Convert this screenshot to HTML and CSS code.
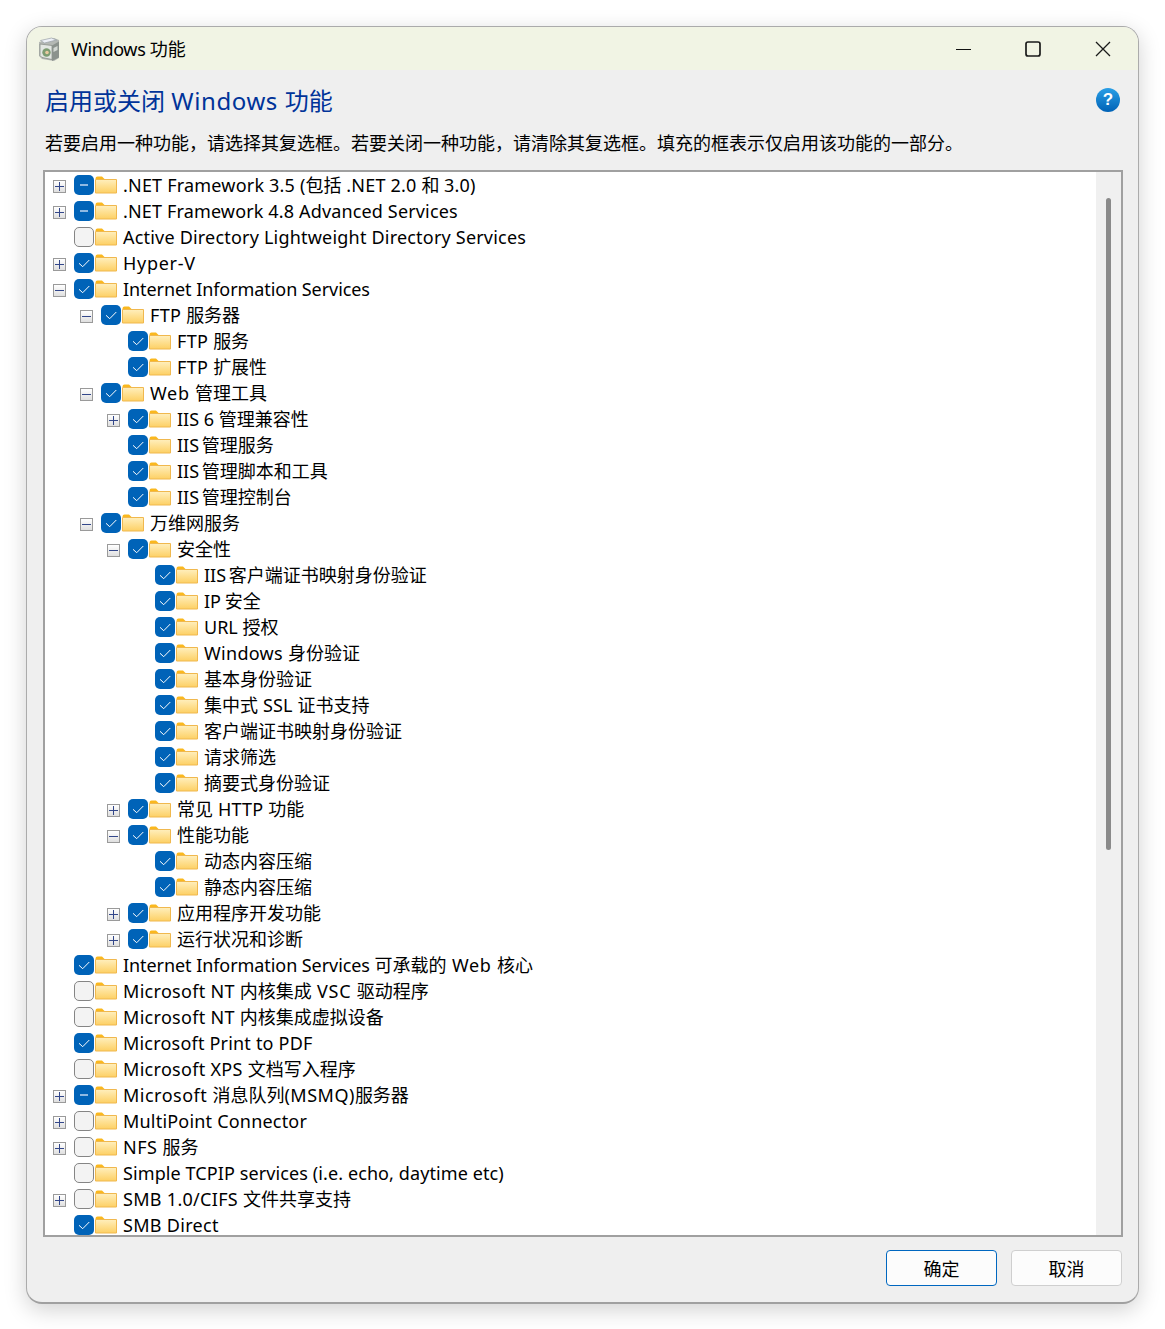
FILE: index.html
```html
<!DOCTYPE html>
<html lang="zh-CN">
<head>
<meta charset="utf-8">
<title>Windows 功能</title>
<link rel="stylesheet" href="styles.css">
</head>
<body>
<svg class="defs" aria-hidden="true">
  <defs>
    <linearGradient id="fg" x1="0" y1="0" x2="0" y2="1"><stop offset="0" stop-color="#ffefbd"/><stop offset="1" stop-color="#fdd064"/></linearGradient>
    <symbol id="folder" viewBox="0 0 22 18"><path d="M0.5 2.5q0-2 2-2h4.5l2.5 2.5h-9z" fill="#fab81e"/><path d="M0.5 3.500h21v13.500h-21z" fill="url(#fg)" stroke="#f0b84e"/></symbol>
    <symbol id="tick" viewBox="0 0 20 20"><path d="M5 10.300l3.700 3.400 6.600-6.700" fill="none" stroke="#fff" stroke-width="1"/></symbol>
  </defs>
</svg>
<div class="window">
  <header class="titlebar">
    <svg class="appicon" viewBox="0 0 22 24"><path d="M1 5l15-4 5 2v18l-5 3-12-2-3-3z" fill="#b4b8b4"/><path d="M2 7l12 1.500v14l-10-2-2-2z" fill="#e2e6e2" stroke="#8a8f8a" stroke-width=".8"/><path d="M14 8.500l7-4v16l-7 3.500z" fill="#8b928d"/><path d="M2.500 3.500l11-2.500 5 2-12 3z" fill="#eceff6" stroke="#9aa0a8" stroke-width=".7"/><circle cx="8.500" cy="15.500" r="4.200" fill="#7d9c72"/><circle cx="9" cy="15.500" r="1.800" fill="#e9c9a0"/><path d="M15.500 11l4-2v4l-4 2z" fill="#d3d8d3"/></svg>
    <span class="wintitle"><em class="tight">Windows </em>功能</span>
    <div class="controls">
      <span class="ctl"><svg class="crisp" viewBox="0 0 16 16"><path d="M0.500 8.500h15" stroke="#111" stroke-width="1"/></svg></span>
      <span class="ctl ctl-max"><svg viewBox="0 0 16 16"><rect x="1" y="1" width="14" height="14" rx="2" fill="none" stroke="#1a1a1a" stroke-width="1.700"/></svg></span>
      <span class="ctl"><svg viewBox="0 0 16 16"><path d="M1 1l14 14M15 1L1 15" stroke="#1a1a1a" stroke-width="1.300"/></svg></span>
    </div>
  </header>
  <main class="content">
    <div class="headrow">
      <h1 class="heading">启用或关闭 <em class="wide">Windows </em>功能</h1>
      <span class="help">?</span>
    </div>
    <p class="desc">若要启用一种功能，请选择其复选框。若要关闭一种功能，请清除其复选框。填充的框表示仅启用该功能的一部分。</p>
    <div class="listbox">
      <div class="tree">
        <div class="row l0"><i class="exp plus"></i><b class="cb mix"></b><svg class="folder"><use href="#folder"/></svg><span><em class="p2">.NET Framework 3.5 (</em>包括 <em class="p2">.NET 2.0 </em>和 <em class="p2">3.0)</em></span></div>
        <div class="row l0"><i class="exp plus"></i><b class="cb mix"></b><svg class="folder"><use href="#folder"/></svg><span><em class="p15">.NET Framework 4.8 Advanced Services</em></span></div>
        <div class="row l0"><i class="exp none"></i><b class="cb off"></b><svg class="folder"><use href="#folder"/></svg><span><em class="p2">Active Directory Lightweight Directory Services</em></span></div>
        <div class="row l0"><i class="exp plus"></i><b class="cb on"><svg><use href="#tick"/></svg></b><svg class="folder"><use href="#folder"/></svg><span><em class="p7">Hyper-V</em></span></div>
        <div class="row l0"><i class="exp minus"></i><b class="cb on"><svg><use href="#tick"/></svg></b><svg class="folder"><use href="#folder"/></svg><span><em class="n07">Internet Information Services</em></span></div>
        <div class="row l1"><i class="exp minus"></i><b class="cb on"><svg><use href="#tick"/></svg></b><svg class="folder"><use href="#folder"/></svg><span><em class="p3">FTP </em>服务器</span></div>
        <div class="row l2"><i class="exp none"></i><b class="cb on"><svg><use href="#tick"/></svg></b><svg class="folder"><use href="#folder"/></svg><span><em class="p3">FTP </em>服务</span></div>
        <div class="row l2"><i class="exp none"></i><b class="cb on"><svg><use href="#tick"/></svg></b><svg class="folder"><use href="#folder"/></svg><span><em class="p3">FTP </em>扩展性</span></div>
        <div class="row l1"><i class="exp minus"></i><b class="cb on"><svg><use href="#tick"/></svg></b><svg class="folder"><use href="#folder"/></svg><span><em class="p7">Web </em>管理工具</span></div>
        <div class="row l2"><i class="exp plus"></i><b class="cb on"><svg><use href="#tick"/></svg></b><svg class="folder"><use href="#folder"/></svg><span>IIS 6 管理兼容性</span></div>
        <div class="row l2"><i class="exp none"></i><b class="cb on"><svg><use href="#tick"/></svg></b><svg class="folder"><use href="#folder"/></svg><span><em class="n5">IIS </em>管理服务</span></div>
        <div class="row l2"><i class="exp none"></i><b class="cb on"><svg><use href="#tick"/></svg></b><svg class="folder"><use href="#folder"/></svg><span><em class="n5">IIS </em>管理脚本和工具</span></div>
        <div class="row l2"><i class="exp none"></i><b class="cb on"><svg><use href="#tick"/></svg></b><svg class="folder"><use href="#folder"/></svg><span><em class="n5">IIS </em>管理控制台</span></div>
        <div class="row l1"><i class="exp minus"></i><b class="cb on"><svg><use href="#tick"/></svg></b><svg class="folder"><use href="#folder"/></svg><span>万维网服务</span></div>
        <div class="row l2"><i class="exp minus"></i><b class="cb on"><svg><use href="#tick"/></svg></b><svg class="folder"><use href="#folder"/></svg><span>安全性</span></div>
        <div class="row l3"><i class="exp none"></i><b class="cb on"><svg><use href="#tick"/></svg></b><svg class="folder"><use href="#folder"/></svg><span><em class="n5">IIS </em>客户端证书映射身份验证</span></div>
        <div class="row l3"><i class="exp none"></i><b class="cb on"><svg><use href="#tick"/></svg></b><svg class="folder"><use href="#folder"/></svg><span><em class="n3">IP </em>安全</span></div>
        <div class="row l3"><i class="exp none"></i><b class="cb on"><svg><use href="#tick"/></svg></b><svg class="folder"><use href="#folder"/></svg><span>URL 授权</span></div>
        <div class="row l3"><i class="exp none"></i><b class="cb on"><svg><use href="#tick"/></svg></b><svg class="folder"><use href="#folder"/></svg><span><em class="p3">Windows </em>身份验证</span></div>
        <div class="row l3"><i class="exp none"></i><b class="cb on"><svg><use href="#tick"/></svg></b><svg class="folder"><use href="#folder"/></svg><span>基本身份验证</span></div>
        <div class="row l3"><i class="exp none"></i><b class="cb on"><svg><use href="#tick"/></svg></b><svg class="folder"><use href="#folder"/></svg><span>集中式<em class="p2"> SSL </em>证书支持</span></div>
        <div class="row l3"><i class="exp none"></i><b class="cb on"><svg><use href="#tick"/></svg></b><svg class="folder"><use href="#folder"/></svg><span>客户端证书映射身份验证</span></div>
        <div class="row l3"><i class="exp none"></i><b class="cb on"><svg><use href="#tick"/></svg></b><svg class="folder"><use href="#folder"/></svg><span>请求筛选</span></div>
        <div class="row l3"><i class="exp none"></i><b class="cb on"><svg><use href="#tick"/></svg></b><svg class="folder"><use href="#folder"/></svg><span>摘要式身份验证</span></div>
        <div class="row l2"><i class="exp plus"></i><b class="cb on"><svg><use href="#tick"/></svg></b><svg class="folder"><use href="#folder"/></svg><span>常见<em class="p2"> HTTP </em>功能</span></div>
        <div class="row l2"><i class="exp minus"></i><b class="cb on"><svg><use href="#tick"/></svg></b><svg class="folder"><use href="#folder"/></svg><span>性能功能</span></div>
        <div class="row l3"><i class="exp none"></i><b class="cb on"><svg><use href="#tick"/></svg></b><svg class="folder"><use href="#folder"/></svg><span>动态内容压缩</span></div>
        <div class="row l3"><i class="exp none"></i><b class="cb on"><svg><use href="#tick"/></svg></b><svg class="folder"><use href="#folder"/></svg><span>静态内容压缩</span></div>
        <div class="row l2"><i class="exp plus"></i><b class="cb on"><svg><use href="#tick"/></svg></b><svg class="folder"><use href="#folder"/></svg><span>应用程序开发功能</span></div>
        <div class="row l2"><i class="exp plus"></i><b class="cb on"><svg><use href="#tick"/></svg></b><svg class="folder"><use href="#folder"/></svg><span>运行状况和诊断</span></div>
        <div class="row l0"><i class="exp none"></i><b class="cb on"><svg><use href="#tick"/></svg></b><svg class="folder"><use href="#folder"/></svg><span><em class="n07">Internet Information Services </em>可承载的<em class="p7"> Web </em>核心</span></div>
        <div class="row l0"><i class="exp none"></i><b class="cb off"></b><svg class="folder"><use href="#folder"/></svg><span><em class="p3">Microsoft NT </em>内核集成<em class="p7"> VSC </em>驱动程序</span></div>
        <div class="row l0"><i class="exp none"></i><b class="cb off"></b><svg class="folder"><use href="#folder"/></svg><span><em class="p3">Microsoft NT </em>内核集成虚拟设备</span></div>
        <div class="row l0"><i class="exp none"></i><b class="cb on"><svg><use href="#tick"/></svg></b><svg class="folder"><use href="#folder"/></svg><span><em class="p2">Microsoft Print to PDF</em></span></div>
        <div class="row l0"><i class="exp none"></i><b class="cb off"></b><svg class="folder"><use href="#folder"/></svg><span><em class="p3">Microsoft XPS </em>文档写入程序</span></div>
        <div class="row l0"><i class="exp plus"></i><b class="cb mix"></b><svg class="folder"><use href="#folder"/></svg><span><em class="p5">Microsoft </em>消息队列<em class="p5">(MSMQ)</em>服务器</span></div>
        <div class="row l0"><i class="exp plus"></i><b class="cb off"></b><svg class="folder"><use href="#folder"/></svg><span><em class="p2">MultiPoint Connector</em></span></div>
        <div class="row l0"><i class="exp plus"></i><b class="cb off"></b><svg class="folder"><use href="#folder"/></svg><span><em class="p5">NFS </em>服务</span></div>
        <div class="row l0"><i class="exp none"></i><b class="cb off"></b><svg class="folder"><use href="#folder"/></svg><span><em class="p1">Simple TCPIP services (i.e. echo, daytime etc)</em></span></div>
        <div class="row l0"><i class="exp plus"></i><b class="cb off"></b><svg class="folder"><use href="#folder"/></svg><span><em class="p3">SMB 1.0/CIFS </em>文件共享支持</span></div>
        <div class="row l0"><i class="exp none"></i><b class="cb on"><svg><use href="#tick"/></svg></b><svg class="folder"><use href="#folder"/></svg><span><em class="p3">SMB Direct</em></span></div>
      </div>
      <div class="track"><div class="thumb"></div></div>
    </div>
    <footer class="footer">
      <button class="btn primary">确定</button>
      <button class="btn">取消</button>
    </footer>
  </main>
</div>
</body>
</html>
```
FILE: styles.css
```css
html, body { margin: 0; padding: 0; background: #fff; }
body {
  width: 1165px;
  height: 1329px;
  overflow: hidden;
  font-family: "Noto Sans", "Noto Sans CJK SC", sans-serif;
  font-size: 18px;
  color: #000;
}
em { font-style: normal; }
.n07 { letter-spacing: -.07px; }
.n3 { word-spacing: -1px; }
.n5 { word-spacing: -2px; }
.p1 { letter-spacing: .1px; }
.p15 { letter-spacing: .15px; }
.p2 { letter-spacing: .2px; }
.p3 { letter-spacing: .3px; }
.p5 { letter-spacing: .5px; }
.p7 { letter-spacing: .7px; }
.tight { letter-spacing: -.35px; }
.wide { letter-spacing: .6px; }
.defs { width: 0; height: 0; display: block; }
.window {
  margin: 26px 0 0 26px;
  width: 1113px;
  height: 1278px;
  box-sizing: border-box;
  border: 1px solid #ababab;
  border-bottom: 2px solid #a0a0a0;
  border-radius: 16px;
  overflow: hidden;
  background: #efefef;
  box-shadow: 0 6px 22px rgba(0, 0, 0, .18);
  display: flex;
  flex-direction: column;
}
.titlebar {
  height: 43px;
  flex: none;
  display: flex;
  align-items: center;
  background: #f1f4e4;
  padding-left: 11px;
}
.appicon { width: 22px; height: 24px; margin-right: 11px; }
.wintitle { font-size: 18px; line-height: 24px; }
.controls { margin-left: auto; display: flex; }
.ctl { width: 70px; height: 43px; display: flex; align-items: center; justify-content: center; }
.ctl svg { width: 16px; height: 16px; }
.crisp { shape-rendering: crispEdges; }
.ctl-max svg { margin-right: 1px; }
.content {
  flex: 1;
  display: flex;
  flex-direction: column;
  padding: 15px 15px 0 16px;
}
.headrow { display: flex; justify-content: space-between; align-items: center; height: 32px; padding: 0 3px 0 2px; }
.heading { margin: 0; font-size: 24px; font-weight: 400; line-height: 32px; color: #003399; }
.help {
  width: 24px;
  height: 24px;
  margin-top: -3px;
  border-radius: 50%;
  background: linear-gradient(#2a9fe6, #0062b6);
  color: #fff;
  font-family: "Liberation Sans", sans-serif;
  font-weight: 700;
  font-size: 17px;
  line-height: 24px;
  text-align: center;
}
.desc { margin: 13px 0 14px; padding-left: 2px; line-height: 26px; height: 26px; white-space: nowrap; }
.listbox {
  height: 1067px;
  flex: none;
  box-sizing: border-box;
  border: 2px solid #a0a0a0;
  background: #fff;
  display: flex;
  overflow: hidden;
}
.tree { flex: 1; min-width: 0; overflow: hidden; }
.track { width: 25px; flex: none; background: #f0f0f0; padding: 26px 0 0 10px; box-sizing: border-box; }
.thumb { width: 5px; height: 652px; border-radius: 3px; background: #8a8a8a; }
.row { height: 26px; display: flex; align-items: center; white-space: nowrap; line-height: 26px; }
.row > span { margin-left: 6px; }
.l0 { padding-left: 8px; }
.l1 { padding-left: 35px; }
.l2 { padding-left: 62px; }
.l3 { padding-left: 89px; }
.exp {
  width: 13px;
  height: 13px;
  margin: 3px 8px 0 0;
  box-sizing: border-box;
  flex: none;
  position: relative;
  display: block;
}
.plus, .minus { border: 1px solid #9a9a9a; background: linear-gradient(#fff, #dfdfdf); }
.plus::before, .minus::before {
  content: "";
  position: absolute;
  left: 1px;
  top: 5px;
  width: 9px;
  height: 1px;
  background: #33478a;
}
.plus::after {
  content: "";
  position: absolute;
  left: 5px;
  top: 1px;
  width: 1px;
  height: 9px;
  background: #33478a;
}
.cb {
  width: 20px;
  height: 20px;
  flex: none;
  box-sizing: border-box;
  border-radius: 5px;
  display: block;
  position: relative;
}
.cb svg { width: 20px; height: 20px; display: block; }
.on { background: #0063b8; }
.mix { background: #0063b8; }
.mix::before {
  content: "";
  position: absolute;
  left: 6px;
  top: 9px;
  width: 8px;
  height: 2px;
  background: #8fb9e2;
}
.off { background: #f3f3f3; border: 1.5px solid #858585; }
.folder { width: 22px; height: 18px; flex: none; margin: -1px 0 0 1px; }
.footer { display: flex; justify-content: flex-end; gap: 14px; margin-top: 13px; padding-right: 1px; }
.btn {
  width: 111px;
  height: 36px;
  box-sizing: border-box;
  border: 1px solid #cfcfcf;
  border-radius: 4px;
  background: #fcfcfc;
  font: inherit;
  color: #000;
  padding: 0;
}
.primary { border-color: #0067c0; }
```
